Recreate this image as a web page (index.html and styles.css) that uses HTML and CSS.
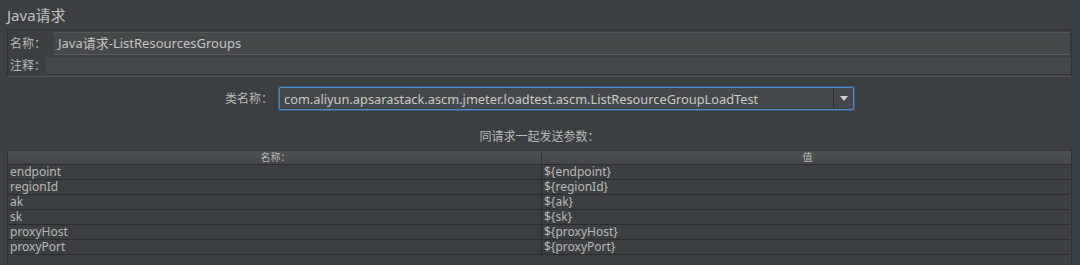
FILE: index.html
```html
<!DOCTYPE html>
<html>
<head>
<meta charset="utf-8">
<title>Java请求</title>
<link rel="stylesheet" href="styles.css">
</head>
<body>
<div class="panel">
  <h1 class="title">Java请求</h1>

  <div class="namebox">
    <div class="field-row">
      <span class="label">名称：</span>
      <div class="input name-input">Java请求-ListResourcesGroups</div>
    </div>
    <div class="field-row">
      <span class="label">注释：</span>
      <div class="input comment-input"></div>
    </div>
  </div>

  <div class="class-row">
    <span class="label">类名称：</span>
    <div class="combo">
      <span class="combo-text">com.aliyun.apsarastack.ascm.jmeter.loadtest.ascm.ListResourceGroupLoadTest</span>
      <span class="combo-btn"><span class="arrow"></span></span>
    </div>
  </div>

  <div class="params-title">同请求一起发送参数：</div>

  <div class="table">
    <div class="thead">
      <div class="cell">名称：</div>
      <div class="cell">值</div>
    </div>
    <div class="trow"><div class="cell">endpoint</div><div class="cell">${endpoint}</div></div>
    <div class="trow"><div class="cell">regionId</div><div class="cell">${regionId}</div></div>
    <div class="trow"><div class="cell">ak</div><div class="cell">${ak}</div></div>
    <div class="trow"><div class="cell">sk</div><div class="cell">${sk}</div></div>
    <div class="trow"><div class="cell">proxyHost</div><div class="cell">${proxyHost}</div></div>
    <div class="trow"><div class="cell">proxyPort</div><div class="cell">${proxyPort}</div></div>
  </div>
</div>
</body>
</html>
```

FILE: styles.css
```css
body {
   margin: 0;
   background-color: #3c3f41;
   color: #b8b8b8;
   font-family: "Noto Sans", "Noto Sans CJK SC", sans-serif;
   font-size: 12px;
   overflow: hidden;
}

.panel {
   padding: 0 8px 0 7px;
   height: 265px;
   overflow: hidden;
}

.title {
   margin: 0;
   padding: 6px 0 0 0;
   height: 23px;
   font-size: 15px;
   font-weight: normal;
   line-height: 18px;
   color: #c0c0c0;
}

.namebox {
   border: 1px solid #2f3133;
   border-bottom-color: #555859;
   height: 44px;
   padding-top: 2px;
   display: flex;
   flex-direction: column;
   gap: 2px;
}

.field-row {
   display: flex;
   align-items: center;
}

.label {
   padding-left: 2px;
   white-space: nowrap;
   line-height: 16px;
}

.input {
   flex: 1;
   box-sizing: border-box;
}

.name-input {
   margin-left: 7px;
   height: 23px;
   background: #46494a;
   border: 1px solid #3e4143;
   border-top-color: #535658;
   border-bottom-color: #5a5d5f;
   padding-left: 4px;
   line-height: 21px;
   font-size: 13px;
   color: #c4c4c4;
   margin-right: 1px;
}

.comment-input {
   margin-left: 0;
   height: 18px;
   background: #45484a;
   border-top: 1px solid #404344;
   border-bottom: 1px solid #333537;
}

.class-row {
   display: flex;
   align-items: center;
   padding-left: 216px;
   margin-top: 10px;
   height: 23px;
}

.class-row .label {
   padding-right: 6px;
}

.combo {
   width: 575px;
   height: 23px;
   box-sizing: border-box;
   border: 1px solid #4f86bd;
   border-radius: 2px;
   box-shadow: 0 0 0 1px #3b5f84;
   background: #45484a;
   display: flex;
   align-items: center;
}

.combo-text {
   flex: 1;
   padding-left: 4px;
   font-size: 12.8px;
   color: #c8c8c8;
   white-space: nowrap;
   overflow: hidden;
}

.combo-btn {
   width: 19px;
   height: 21px;
   border-left: 1px solid #313335;
   display: flex;
   align-items: center;
   justify-content: center;
}

.arrow {
   width: 0;
   height: 0;
   border-left: 4px solid transparent;
   border-right: 4px solid transparent;
   border-top: 5px solid #d0d0d0;
}

.params-title {
   text-align: center;
   margin-top: 20px;
   height: 20px;
   line-height: 14px;
}

.table {
   border: 1px solid #2e3032;
   border-top: 1px solid #333537;
   height: 120px;
}

.thead {
   display: flex;
   height: 13px;
   background: linear-gradient(#4d5153, #454849);
   border-bottom: 1px solid #2b2d2e;
   font-size: 10px;
   line-height: 13px;
}

.thead .cell {
   text-align: center;
}

.thead .cell + .cell {
   border-left: 1px solid #333537;
}

.cell {
   width: 531px;
   padding-left: 2px;
   white-space: nowrap;
}

.cell + .cell {
   flex: 1;
   width: auto;
}

.trow {
   display: flex;
   height: 14px;
   line-height: 14px;
   border-bottom: 1px solid #2b2d2e;
   margin-right: 2px;
}

.trow .cell + .cell {
   border-left: 1px solid #2b2d2e;
}
```
